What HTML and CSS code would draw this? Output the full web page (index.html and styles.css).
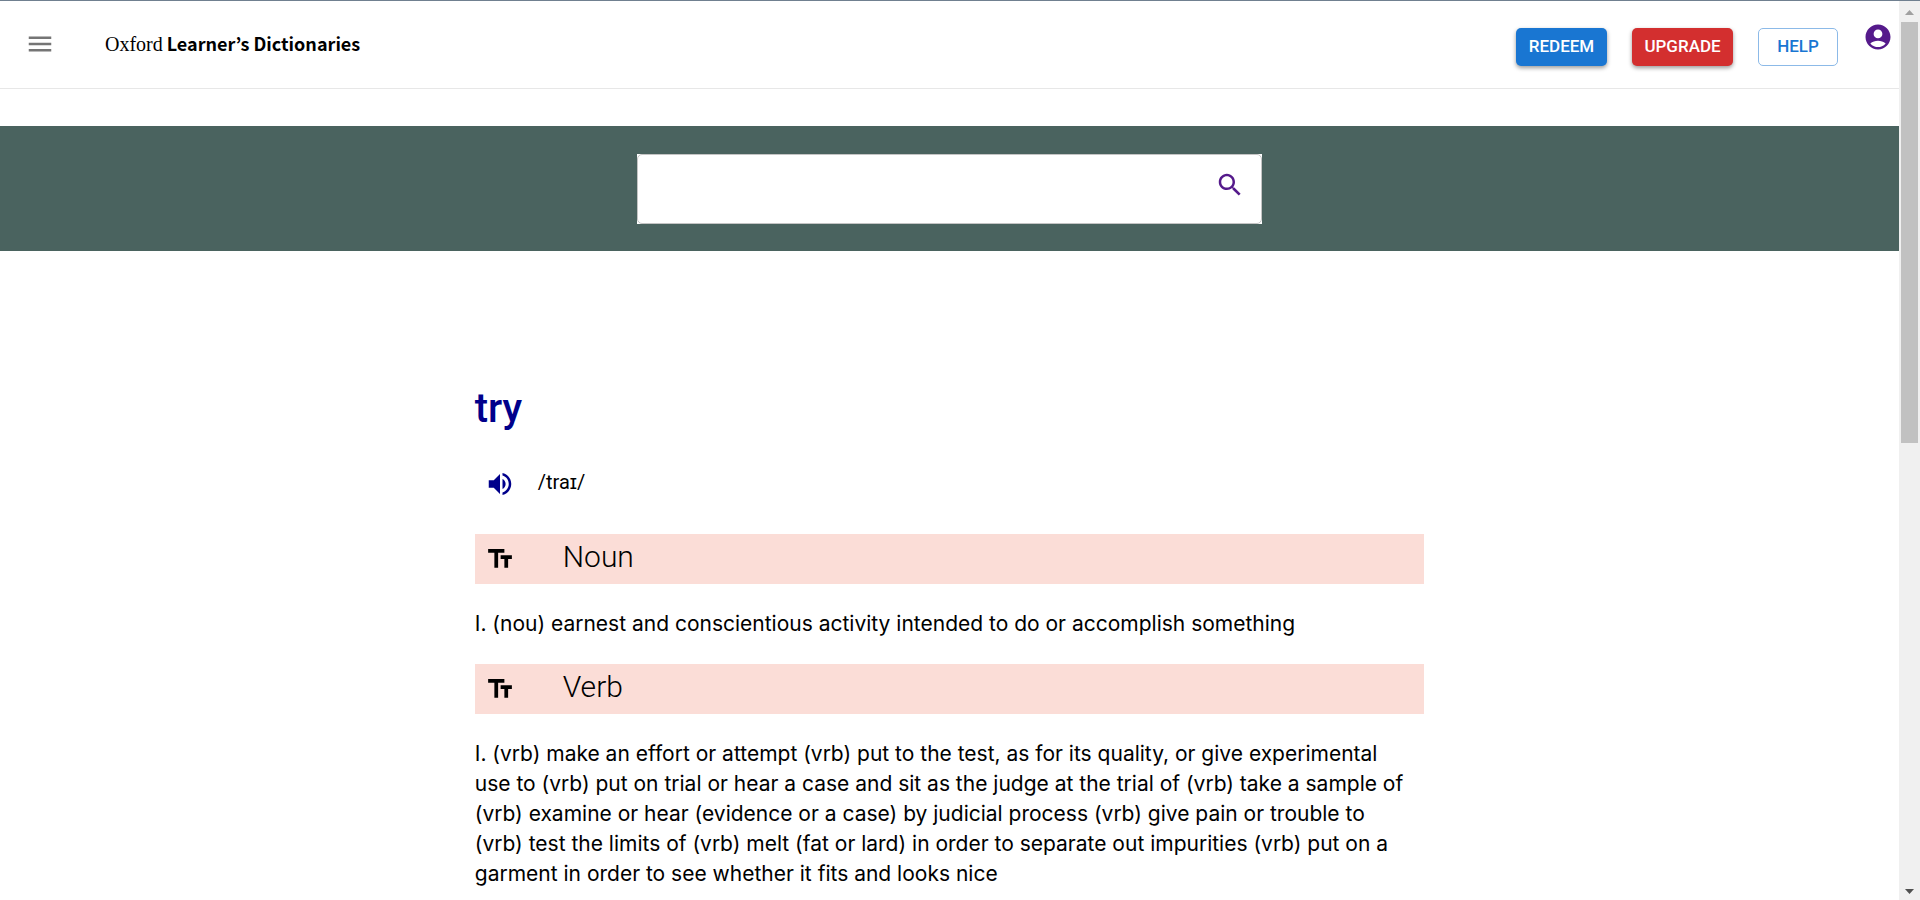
FILE: index.html
```html
<!DOCTYPE html>
<html lang="en">
<head>
<meta charset="utf-8">
<title>Oxford Learner’s Dictionaries</title>
<link rel="stylesheet" href="styles.css">
</head>
<body>
<div class="page">
  <header class="topbar">
    <button class="icon-button menu" type="button" aria-label="Menu">
      <svg class="icon" viewBox="0 0 24 24"><path d="M3 18h18v-2H3v2zm0-5h18v-2H3v2zm0-7v2h18V6H3z"/></svg>
    </button>
    <a class="logo" href="#"><span class="logo-light">Oxford</span> <span class="logo-bold">Learner’s Dictionaries</span></a>
    <nav class="actions">
      <button class="btn btn-blue" type="button">REDEEM</button>
      <button class="btn btn-red" type="button">UPGRADE</button>
      <button class="btn btn-outline" type="button">HELP</button>
      <a class="account" href="#" aria-label="Account">
        <svg class="icon" viewBox="0 0 24 24"><path d="M12 2C6.48 2 2 6.48 2 12s4.48 10 10 10 10-4.48 10-10S17.52 2 12 2zm0 4c1.93 0 3.5 1.57 3.5 3.5S13.93 13 12 13s-3.5-1.57-3.5-3.5S10.07 6 12 6zm0 14c-2.03 0-4.43-.82-6.14-2.88C7.55 15.8 9.68 15 12 15s4.45.8 6.14 2.12C16.43 19.18 14.03 20 12 20z"/></svg>
      </a>
    </nav>
  </header>
  <form class="search-band" role="search">
    <div class="search-box">
      <div class="search-field">
        <input class="search-input" type="text" aria-label="Search">
        <button class="icon-button search-button" type="button" aria-label="Search">
          <svg class="icon" viewBox="0 0 24 24"><path d="M15.5 14h-.79l-.28-.27C15.41 12.59 16 11.11 16 9.5 16 5.91 13.09 3 9.5 3S3 5.91 3 9.5 5.91 16 9.5 16c1.61 0 3.09-.59 4.23-1.57l.27.28v.79l5 4.99L20.49 19l-4.99-5zm-6 0C7.01 14 5 11.99 5 9.5S7.01 5 9.5 5 14 7.01 14 9.5 11.99 14 9.5 14z"/></svg>
        </button>
      </div>
    </div>
  </form>
  <main class="entry">
    <h1 class="headword">try</h1>
    <div class="phonetics">
      <button class="icon-button speaker" type="button" aria-label="Listen">
        <svg class="icon" viewBox="0 0 24 24"><path d="M3 9v6h4l5 5V4L7 9H3zm13.5 3c0-1.77-1.02-3.29-2.5-4.03v8.05c1.48-.73 2.5-2.25 2.5-4.02zM14 3.23v2.06c2.89.86 5 3.54 5 6.71s-2.11 5.85-5 6.71v2.06c4.01-.91 7-4.49 7-8.77s-2.99-7.86-7-8.77z"/></svg>
      </button>
      <span class="ipa">/traɪ/</span>
    </div>
    <h2 class="part">
      <svg class="icon" viewBox="0 0 24 24"><path d="M2.5 4v3h5v12h3V7h5V4h-13zm19 5h-9v3h3v7h3v-7h3V9z"/></svg>
      <span class="part-name">Noun</span>
    </h2>
    <p class="meaning">I. (nou) earnest and conscientious activity intended to do or accomplish something</p>
    <h2 class="part">
      <svg class="icon" viewBox="0 0 24 24"><path d="M2.5 4v3h5v12h3V7h5V4h-13zm19 5h-9v3h3v7h3v-7h3V9z"/></svg>
      <span class="part-name">Verb</span>
    </h2>
    <p class="meaning">I. (vrb) make an effort or attempt (vrb) put to the test, as for its quality, or give experimental<br>use to (vrb) put on trial or hear a case and sit as the judge at the trial of (vrb) take a sample of<br>(vrb) examine or hear (evidence or a case) by judicial process (vrb) give pain or trouble to<br>(vrb) test the limits of (vrb) melt (fat or lard) in order to separate out impurities (vrb) put on a<br>garment in order to see whether it fits and looks nice</p>
  </main>
</div>
<div class="scrollbar" aria-hidden="true">
  <svg class="arrow arrow-up" viewBox="0 0 9 5"><path d="M0 5 4.5 0 9 5z"/></svg>
  <div class="track"><div class="thumb"></div></div>
  <svg class="arrow arrow-down" viewBox="0 0 9 5"><path d="M0 0h9L4.5 5z"/></svg>
</div>
</body>
</html>
```

FILE: styles.css
```css
* {
  box-sizing: border-box;
}

body {
  margin: 0;
  height: 100vh;
  display: flex;
  overflow: hidden;
  border-top: 1px solid #708090;
  background: #fff;
  color: #000;
  font-family: Roboto, sans-serif;
}

.page {
  flex: 1;
  min-width: 0;
  overflow: hidden;
}

.icon {
  display: block;
  width: 30px;
  height: 30px;
  flex: none;
  fill: currentColor;
}

.icon-button {
  padding: 0;
  border: 0;
  background: none;
  cursor: pointer;
}

/* Header */
.topbar {
  display: flex;
  align-items: center;
  height: 88px;
  padding: 0 6px 2px 25px;
  border-bottom: 1px solid #e7e7e7;
}

.menu {
  color: #757575;
}

.logo {
  margin-left: 50px;
  color: #000;
  text-decoration: none;
  white-space: nowrap;
}

.logo-light {
  font: 20px/28px "Liberation Serif", serif;
}

.logo-bold {
  font: 700 18px/28px "Noto Sans CJK KR", sans-serif;
}

.actions {
  display: flex;
  align-items: center;
  gap: 25px;
  margin-left: auto;
}

.btn {
  height: 38px;
  margin-top: 6px;
  padding: 0 12px 2px;
  border: 0;
  border-radius: 5px;
  color: #fff;
  font: 500 17px Roboto, sans-serif;
  cursor: pointer;
}

.btn-blue {
  min-width: 91px;
  background: #1976d2;
  box-shadow: 0 2px 4px rgba(0, 0, 0, 0.4);
}

.btn-red {
  min-width: 101px;
  background: #d32f2f;
  box-shadow: 0 2px 4px rgba(0, 0, 0, 0.4);
}

.btn-outline {
  min-width: 80px;
  border: 1px solid #8cbae8;
  background: #fff;
  color: #1976d2;
}

.account {
  margin: 0 0 14px;
  color: #551a8b;
}

/* Search */
.search-band {
  display: flex;
  justify-content: center;
  margin-top: 37px;
  padding: 28px 0 27px;
  background: #4a635f;
}

.search-box {
  width: 100%;
  max-width: 625px;
  background: #fff;
}

.search-field {
  display: flex;
  height: 70px;
  padding: 0 16px 0 18px;
  border: 1px solid #c4c4c4;
  border-radius: 5px;
}

.search-input {
  flex: 1;
  min-width: 0;
  border: 0;
  outline: 0;
  background: none;
  font: 20px Roboto, sans-serif;
}

.search-button {
  align-self: flex-start;
  margin-top: 15px;
  color: #551a8b;
}

/* Entry */
.entry {
  width: 50%;
  margin: 0 auto;
  padding-top: 134px;
}

.headword {
  margin: 0;
  color: #00008b;
  font-size: 40px;
  font-weight: 500;
  line-height: 48px;
}

.phonetics {
  display: flex;
  align-items: center;
  gap: 23px;
  margin: 36px 0 35px;
  padding-left: 10px;
}

.speaker {
  color: #00008b;
}

.ipa {
  font-size: 20px;
  line-height: 26px;
  padding-bottom: 4px;
}

.part {
  display: flex;
  align-items: center;
  gap: 48px;
  height: 50px;
  margin: 0;
  padding-left: 10px;
  background: #fbddd7;
}

.part-name {
  padding-bottom: 4px;
  font-size: 30px;
  font-weight: 300;
  line-height: 40px;
}

.meaning {
  margin: 25px 0;
  font-family: Inter, sans-serif;
  font-size: 21px;
  line-height: 30px;
  white-space: nowrap;
}

/* Scroll rail */
.scrollbar {
  display: flex;
  flex-direction: column;
  align-items: center;
  width: 21px;
  padding: 9px 0 6px;
  background: #f0f0f0;
}

.arrow {
  width: 9px;
  height: 5px;
}

.arrow-up {
  fill: #a0a0a0;
}

.arrow-down {
  fill: #505050;
}

.track {
  flex: 1;
  width: 17px;
  padding: 7px 0;
}

.thumb {
  height: 49%;
  background: #c1c1c1;
}
```
